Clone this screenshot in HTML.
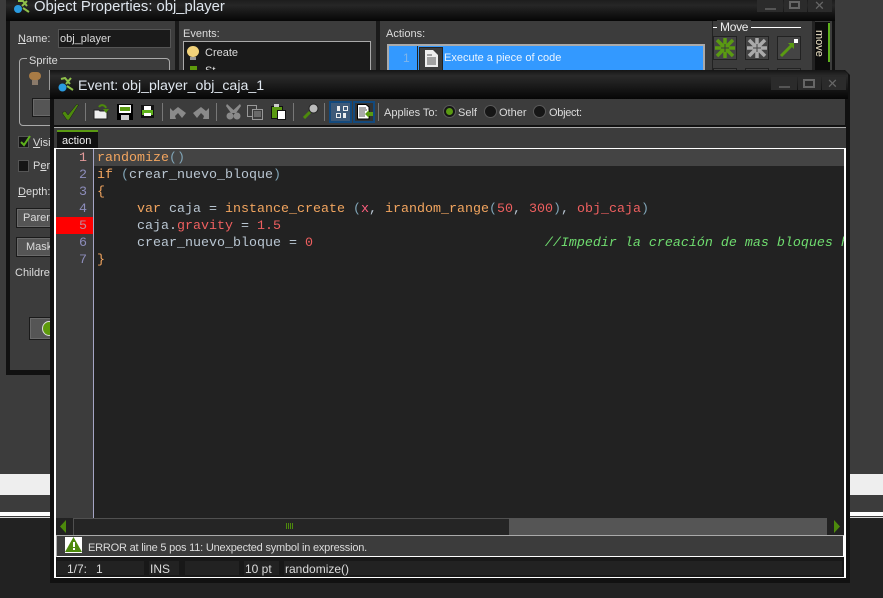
<!DOCTYPE html>
<html><head><meta charset="utf-8">
<style>
html,body{margin:0;padding:0}
body{width:883px;height:598px;position:relative;overflow:hidden;background:#3c3c3c;font-family:"Liberation Sans",sans-serif;font-size:11px;color:#dcdcdc}
.a{position:absolute}
.t{position:absolute;white-space:pre;line-height:14px;margin-top:1px}
.s{font-size:12px;margin-top:0}
.code{position:absolute;left:97px;font:13.33px/17px "Liberation Mono",monospace;white-space:pre;color:#b9c6d2}
.n{position:absolute;left:56px;width:31px;text-align:right;font:13.33px/17px "Liberation Mono",monospace;color:#8d8dbb}
.o{color:#f2a55f}.b{color:#7fa3b5}.r{color:#ee5f5f}.p{color:#b9c6d2}.c{color:#6fdc6f;font-style:italic}
.btn{position:absolute;background:#555;border:1px solid #1a1a1a;box-shadow:inset 0 0 0 1px #6a6a6a;box-sizing:border-box}
.panel{position:absolute;top:561px;height:14px;background:#222}
.wb{position:absolute;background:#2b2b2b}
.sep{position:absolute;top:103px;width:1px;height:18px;background:#777}
.radio{position:absolute;top:105px;width:13px;height:13px;border-radius:50%;background:#161616;border:1px solid #5a5a5a;box-sizing:border-box}
.mv{position:absolute;width:24px;height:24px;background:#444;border:1px solid #222;box-sizing:border-box}
svg{position:absolute;display:block}
</style></head><body>
<!-- background stripes -->
<div class="a" style="left:0;top:474px;width:883px;height:21px;background:#eee"></div>
<div class="a" style="left:0;top:512px;width:883px;height:4px;background:#fff"></div>
<div class="a" style="left:0;top:517px;width:883px;height:1px;background:#ddd"></div>
<div class="a" style="left:0;top:518px;width:883px;height:80px;background:#222"></div>

<!-- back window -->
<div class="a" style="left:6px;top:0;width:829px;height:375px;background:#111"></div>
<div class="a" style="left:10px;top:21px;width:822px;height:349px;background:#3c3c3c"></div>
<div class="a" style="left:6px;top:0;width:829px;height:21px;background:linear-gradient(#1d1d1d,#262626 25%,#060606)"></div>
<svg style="left:14px;top:0" width="16" height="14" viewBox="0 0 16 14"><circle cx="4" cy="9" r="4" fill="#2a9be0"/><path d="M4 1 L9 1 L13 6 M13 1 L8 6 M9 8 L15 12" stroke="#8fc04a" stroke-width="2" fill="none"/></svg>
<div class="t s" style="left:34px;top:-1px;font-size:14.8px;line-height:16px;color:#dfe6ee">Object Properties: obj_player</div>
<div class="wb" style="left:757px;top:0;width:26px;height:12px"></div>
<div class="wb" style="left:784px;top:0;width:23px;height:12px"></div>
<div class="wb" style="left:808px;top:0;width:24px;height:12px"></div>
<div class="a" style="left:765px;top:8px;width:11px;height:2px;background:#555"></div>
<div class="a" style="left:789px;top:1px;width:11px;height:8px;border:2px solid #666;box-sizing:border-box"></div>
<div class="t s" style="left:814px;top:-1px;color:#666;font-size:13px">✕</div>

<div class="t" style="left:18px;top:31px"><u>N</u>ame:</div>
<div class="a" style="left:58px;top:29px;width:113px;height:19px;background:#1a1a1a;border:1px solid #555;box-sizing:border-box"></div>
<div class="t" style="left:60px;top:31px">obj_player</div>
<div class="a" style="left:19px;top:58px;width:151px;height:68px;border:1px solid #aaa;border-radius:4px;box-sizing:border-box"></div>
<div class="t" style="left:27px;top:53px;background:#3c3c3c;padding:0 2px">Sprite</div>
<div class="a" style="left:29px;top:72px;width:12px;height:8px;background:#a87b45;border-radius:4px"></div>
<div class="a" style="left:32px;top:80px;width:6px;height:5px;background:#8a7a6a"></div>
<div class="a" style="left:49px;top:70px;width:10px;height:20px;background:#555;border:1px solid #999;box-sizing:border-box"></div>
<div class="btn" style="left:32px;top:98px;width:40px;height:19px"></div>

<div class="a" style="left:18px;top:136px;width:11px;height:12px;background:#151515;border:1px solid #555;box-sizing:border-box"></div>
<svg style="left:19px;top:134px" width="13" height="13"><path d="M2 8 L5 11 L11 2" stroke="#5eb11c" stroke-width="2" fill="none"/></svg>
<div class="t" style="left:33px;top:135px"><u>V</u>isi</div>
<div class="a" style="left:18px;top:160px;width:11px;height:12px;background:#151515;border:1px solid #555;box-sizing:border-box"></div>
<div class="t" style="left:33px;top:158px">P<u>e</u>r</div>
<div class="t" style="left:18px;top:184px"><u>D</u>epth:</div>
<div class="btn" style="left:16px;top:208px;width:40px;height:20px"></div>
<div class="t" style="left:23px;top:210px">Parent</div>
<div class="btn" style="left:16px;top:237px;width:40px;height:20px"></div>
<div class="t" style="left:26px;top:239px">Mask</div>
<div class="t" style="left:15px;top:265px">Children</div>
<div class="btn" style="left:29px;top:317px;width:30px;height:23px"></div>
<div class="a" style="left:42px;top:321px;width:14px;height:15px;border-radius:50%;background:#5e9a0c;border:1px solid #ddd;box-sizing:border-box"></div>

<div class="a" style="left:175px;top:21px;width:4px;height:60px;background:#1a1a1a"></div>
<div class="t" style="left:183px;top:26px">Events:</div>
<div class="a" style="left:183px;top:41px;width:188px;height:40px;background:#1a1a1a;border:1px solid #aaa;box-sizing:border-box"></div>
<div class="a" style="left:187px;top:46px;width:12px;height:11px;border-radius:50%;background:#f2d27a"></div>
<div class="a" style="left:190px;top:57px;width:6px;height:3px;background:#999"></div>
<div class="t" style="left:205px;top:45px">Create</div>
<div class="a" style="left:190px;top:66px;width:7px;height:6px;background:#5e9a0c"></div>
<div class="t" style="left:205px;top:63px">St</div>
<div class="a" style="left:376px;top:21px;width:4px;height:60px;background:#1a1a1a"></div>
<div class="t" style="left:386px;top:26px">Actions:</div>
<div class="a" style="left:387px;top:44px;width:318px;height:40px;background:#3399ff;border:2px solid #aaa;box-sizing:border-box"></div>
<div class="t" style="left:403px;top:50px;color:#7fb5ea;font-size:12px">1</div>
<div class="a" style="left:417px;top:46px;width:1px;height:30px;background:#222"></div>
<div class="a" style="left:419px;top:47px;width:24px;height:30px;background:#3c3c3c;border:1px solid #222;box-sizing:border-box"></div>
<svg style="left:425px;top:50px" width="13" height="17"><path d="M0 0H8L13 5V17H0Z" fill="#eee"/><path d="M2 5H7M2 8H11M2 10H11M2 12H11M2 14H11" stroke="#555"/></svg>
<div class="t" style="left:444px;top:50px;color:#eaf4ff">Execute a piece of code</div>

<div class="a" style="left:712px;top:21px;width:1px;height:60px;background:#222"></div>
<div class="a" style="left:713px;top:27px;width:88px;height:1px;background:#fff"></div>
<div class="t s" style="left:717px;top:20px;background:#3c3c3c;padding:0 3px;color:#eee;letter-spacing:-.3px">Move</div>
<div class="mv" style="left:713px;top:36px"></div>
<svg style="left:715px;top:38px" width="20" height="20" viewBox="0 0 20 20"><path d="M10 0V20M0 10H20M2 2L18 18M18 2L2 18" stroke="#5a9a12" stroke-width="3.500"/><path d="M10 6V14M6 10H14" stroke="#3a3a3a" stroke-width="1"/></svg>
<div class="mv" style="left:745px;top:36px"></div>
<svg style="left:747px;top:38px" width="20" height="20" viewBox="0 0 20 20"><path d="M10 0V20M0 10H20M2 2L18 18M18 2L2 18" stroke="#aaa" stroke-width="3.500"/><path d="M10 6V14M6 10H14" stroke="#444" stroke-width="1"/></svg>
<div class="mv" style="left:777px;top:36px"></div>
<svg style="left:779px;top:38px" width="20" height="20" viewBox="0 0 20 20"><path d="M2 18L14 6" stroke="#5a9a12" stroke-width="3"/><path d="M9 5H15V11Z" fill="#5a9a12"/><rect x="15" y="1" width="4" height="4" fill="#fff"/></svg>
<div class="mv" style="left:713px;top:68px"></div>
<div class="mv" style="left:745px;top:68px"></div>
<div class="mv" style="left:777px;top:68px"></div>
<div class="a" style="left:812px;top:21px;width:3px;height:60px;background:#222"></div>
<div class="a" style="left:815px;top:22px;width:15px;height:60px;background:#0c0c0c"></div>
<div class="a" style="left:828px;top:23px;width:2px;height:39px;background:#5eb11c"></div>
<div class="t s" style="left:809px;top:33px;transform:rotate(90deg);color:#f0e6c8;width:20px;text-align:center;font-size:11px">move</div>

<!-- event window -->
<div class="a" style="left:50px;top:70px;width:800px;height:513px;background:#111;clip-path:polygon(0 0,795px 0,800px 5px,100% 100%,0 100%)"></div>
<div class="a" style="left:50px;top:70px;width:798px;height:29px;background:linear-gradient(#151515,#2a2a2a 20%,#060606);clip-path:polygon(0 0,794px 0,798px 4px,100% 100%,0 100%)"></div>
<svg style="left:58px;top:77px" width="16" height="15" viewBox="0 0 16 15"><circle cx="4.500" cy="10.500" r="4" fill="#2a9be0"/><path d="M3 2 L7 1 L12 7 M13 1 L8 7 M9 9 L15 13" stroke="#8fc04a" stroke-width="2" fill="none"/></svg>
<div class="t s" style="left:78px;top:78px;font-size:14.2px;line-height:16px;color:#dfe6ee">Event: obj_player_obj_caja_1</div>
<div class="wb" style="left:771px;top:77px;width:26px;height:13px"></div>
<div class="wb" style="left:798px;top:77px;width:23px;height:13px"></div>
<div class="wb" style="left:822px;top:77px;width:24px;height:13px"></div>
<div class="a" style="left:779px;top:86px;width:11px;height:2px;background:#555"></div>
<div class="a" style="left:803px;top:79px;width:12px;height:9px;border:2px solid #666;box-sizing:border-box"></div>
<div class="t s" style="left:827px;top:77px;color:#666;font-size:13px">✕</div>

<div class="a" style="left:54px;top:99px;width:791px;height:26px;background:#3c3c3c"></div>
<div class="a" style="left:54px;top:127px;width:792px;height:1px;background:#aaa"></div>
<div class="a" style="left:54px;top:128px;width:792px;height:20px;background:#3c3c3c"></div>

<!-- toolbar icons -->
<svg style="left:62px;top:104px" width="17" height="16" viewBox="0 0 17 16"><path d="M0 9L3 7L6 11L15 0L16.500 1L7 16H5Z" fill="#4d8a0c" stroke="#1a1a1a" stroke-width=".5"/></svg>
<div class="sep" style="left:85px"></div>
<svg style="left:93px;top:104px" width="16" height="16" viewBox="0 0 16 16"><path d="M1 6H6L7 7H14V15H1Z" fill="#eee" stroke="#222"/><path d="M6 3C8 0 12 1 13 4" stroke="#4d8a0c" stroke-width="2" fill="none"/><path d="M10 5H16L13 9Z" fill="#4d8a0c"/></svg>
<svg style="left:117px;top:104px" width="16" height="16" viewBox="0 0 16 16"><rect width="16" height="16" fill="#000"/><rect x="2" y="1" width="12" height="8" fill="#fff"/><rect x="3" y="3" width="10" height="4" fill="#5a9a12"/><rect x="4" y="11" width="8" height="5" fill="#ccc"/></svg>
<svg style="left:141px;top:105px" width="13" height="13" viewBox="0 0 13 13"><rect width="13" height="13" fill="#111"/><rect x="3" y="1" width="7" height="4" fill="#fff"/><rect x="1" y="5" width="11" height="5" fill="#5eb11c"/><rect x="3" y="8" width="7" height="3" fill="#fff"/></svg>
<div class="sep" style="left:162px"></div>
<svg style="left:170px;top:105px" width="16" height="14" viewBox="0 0 16 14"><path d="M0 3L3 6L8 2L16 8L12 13L8 8L5 11L6 14H0Z" fill="#8a8a8a"/></svg>
<svg style="left:193px;top:105px" width="16" height="14" viewBox="0 0 16 14"><path d="M16 3L13 6L8 2L0 8L4 13L8 8L11 11L10 14H16Z" fill="#8a8a8a"/></svg>
<div class="sep" style="left:216px"></div>
<svg style="left:226px;top:104px" width="15" height="16" viewBox="0 0 15 16"><path d="M1 0L7.500 6L14 0L15 2L10 9H5L0 2Z" fill="#8a8a8a"/><circle cx="4" cy="12" r="3.500" fill="#8a8a8a"/><circle cx="11" cy="12" r="3.500" fill="#8a8a8a"/></svg>
<svg style="left:247px;top:105px" width="16" height="15" viewBox="0 0 16 15"><rect x=".5" y=".5" width="9" height="11" fill="#3c3c3c" stroke="#999"/><rect x="5.500" y="4.500" width="10" height="10" fill="#3c3c3c" stroke="#999"/><path d="M7 7H14M7 9H14M7 11H14" stroke="#999"/></svg>
<svg style="left:271px;top:104px" width="15" height="16" viewBox="0 0 15 16"><rect x=".5" y="2.500" width="11" height="12" fill="#5a9a12" stroke="#111"/><rect x="3" y="0" width="5" height="3" fill="#ccc"/><rect x="6.500" y="6.500" width="8" height="9" fill="#fff" stroke="#111"/></svg>
<div class="sep" style="left:293px"></div>
<svg style="left:303px;top:103px" width="16" height="16" viewBox="0 0 16 16"><path d="M7 9L1 15" stroke="#4d8a0c" stroke-width="3"/><circle cx="10.500" cy="5.500" r="4.500" fill="#bbb" stroke="#222"/></svg>
<div class="sep" style="left:324px"></div>
<div class="a" style="left:329px;top:101px;width:23px;height:22px;background:#3f5a78;border:2px solid #12497d;box-sizing:border-box"></div>
<div class="a" style="left:337px;top:106px;width:3px;height:5px;background:#eee"></div>
<div class="a" style="left:343px;top:106px;width:3px;height:3px;border:1px solid #eee"></div>
<div class="a" style="left:336px;top:113px;width:3px;height:3px;border:1px solid #eee"></div>
<div class="a" style="left:343px;top:113px;width:3px;height:5px;background:#eee"></div>
<div class="a" style="left:353px;top:101px;width:22px;height:22px;background:#333;border:2px solid #12497d;box-sizing:border-box"></div>
<svg style="left:357px;top:104px" width="16" height="16" viewBox="0 0 16 16"><path d="M.5 .5H9L12 3V15H.5Z" fill="#fff" stroke="#000"/><path d="M2 4H9M2 6H10M2 8H8M2 10H8M2 12H8" stroke="#555"/><path d="M8 10L12 6V8H16V12H12V14Z" fill="#5a9a12"/></svg>
<div class="sep" style="left:378px"></div>
<div class="t" style="left:384px;top:105px">Applies To:</div>
<div class="radio" style="left:443px"></div>
<div class="a" style="left:446px;top:108px;width:7px;height:7px;border-radius:50%;background:#5a9a12"></div>
<div class="t" style="left:458px;top:105px">Self</div>
<div class="radio" style="left:484px"></div>
<div class="t" style="left:499px;top:105px">Other</div>
<div class="radio" style="left:533px"></div>
<div class="t" style="left:549px;top:105px;letter-spacing:-.3px">Object:</div>

<!-- tab -->
<div class="a" style="left:57px;top:130px;width:41px;height:2px;background:#5a9a12"></div>
<div class="a" style="left:57px;top:132px;width:41px;height:16px;background:#111"></div>
<div class="t" style="left:62px;top:133px;color:#eee">action</div>

<!-- editor -->
<div class="a" style="left:54px;top:148px;width:792px;height:430px;border:2px solid #fff;border-top-width:1px;box-sizing:border-box;background:#222"></div>
<div class="a" style="left:56px;top:149px;width:37px;height:369px;background:#3c3c3c"></div>
<div class="a" style="left:93px;top:149px;width:1px;height:369px;background:#a5a5c5"></div>
<div class="a" style="left:94px;top:149px;width:750px;height:17px;background:#444"></div>
<div class="a" style="left:56px;top:217px;width:37px;height:17px;background:#f00"></div>
<div class="n" style="top:150px;color:#e29a9a">1</div>
<div class="n" style="top:167px">2</div>
<div class="n" style="top:184px">3</div>
<div class="n" style="top:201px">4</div>
<div class="n" style="top:218px;color:#c08a9a">5</div>
<div class="n" style="top:235px">6</div>
<div class="n" style="top:252px">7</div>
<div class="a" style="left:97px;top:150px;width:747px;height:120px;overflow:hidden">
<div class="code" style="left:0;top:0"><span class="o">randomize</span><span class="b">()</span></div>
<div class="code" style="left:0;top:17px"><span class="o">if</span> <span class="b">(</span>crear_nuevo_bloque<span class="b">)</span></div>
<div class="code" style="left:0;top:34px"><span class="o">{</span></div>
<div class="code" style="left:0;top:51px">     <span class="o">var</span> caja = <span class="o">instance_create</span> <span class="b">(</span><span style="color:#ff5f7f">x</span>, <span class="o">irandom_range</span><span class="b">(</span><span class="r">50</span>, <span class="r">300</span><span class="b">)</span>, <span class="r">obj_caja</span><span class="b">)</span></div>
<div class="code" style="left:0;top:68px">     caja.<span class="r">gravity</span> = <span class="r">1.5</span></div>
<div class="code" style="left:0;top:85px">     crear_nuevo_bloque = <span class="r">0</span>                             <span class="c">//Impedir la creación de mas bloques hasta</span></div>
<div class="code" style="left:0;top:102px"><span class="o">}</span></div>
</div>

<!-- scrollbar -->
<div class="a" style="left:56px;top:518px;width:788px;height:17px;background:#222"></div>
<svg style="left:60px;top:520px" width="7" height="13"><path d="M6 0V13L0 6.500Z" fill="#4d8a0c"/></svg>
<div class="a" style="left:73px;top:518px;width:436px;height:17px;background:#252525;border-top:1px solid #505050;border-left:1px solid #505050;box-sizing:border-box"></div>
<div class="a" style="left:509px;top:518px;width:318px;height:17px;background:#555"></div>
<svg style="left:286px;top:523px" width="7" height="6"><path d="M0.500 0V6M2.500 0V6M4.500 0V6M6.500 0V6" stroke="#4d8a0c"/></svg>
<svg style="left:834px;top:520px" width="7" height="13"><path d="M0 0V13L6 6.500Z" fill="#4d8a0c"/></svg>

<!-- error bar -->
<div class="a" style="left:56px;top:535px;width:788px;height:22px;background:#3c3c3c;border:1px solid #fff;border-top-color:#aaa;border-left-color:#aaa;box-sizing:border-box"></div>
<svg style="left:65px;top:537px" width="17" height="16"><rect width="17" height="16" fill="#fff"/><path d="M8.500 0L17 15H0Z" fill="#4d8a0c"/><rect x="8" y="5" width="2" height="5" fill="#fff"/><rect x="8" y="11" width="2" height="2" fill="#fff"/></svg>
<div class="t" style="left:88px;top:540px;letter-spacing:-.2px">ERROR at line 5 pos 11: Unexpected symbol in expression.</div>

<!-- status bar -->
<div class="a" style="left:56px;top:557px;width:788px;height:20px;background:#181818"></div>
<div class="panel" style="left:57px;width:87px"></div>
<div class="panel" style="left:149px;width:30px"></div>
<div class="panel" style="left:185px;width:54px"></div>
<div class="panel" style="left:244px;width:35px"></div>
<div class="panel" style="left:284px;width:558px"></div>
<div class="t s" style="left:67px;top:562px">1/7:</div>
<div class="t s" style="left:96px;top:562px">1</div>
<div class="t s" style="left:150px;top:562px">INS</div>
<div class="t s" style="left:245px;top:562px">10 pt</div>
<div class="t s" style="left:285px;top:562px">randomize()</div>
</body></html>
